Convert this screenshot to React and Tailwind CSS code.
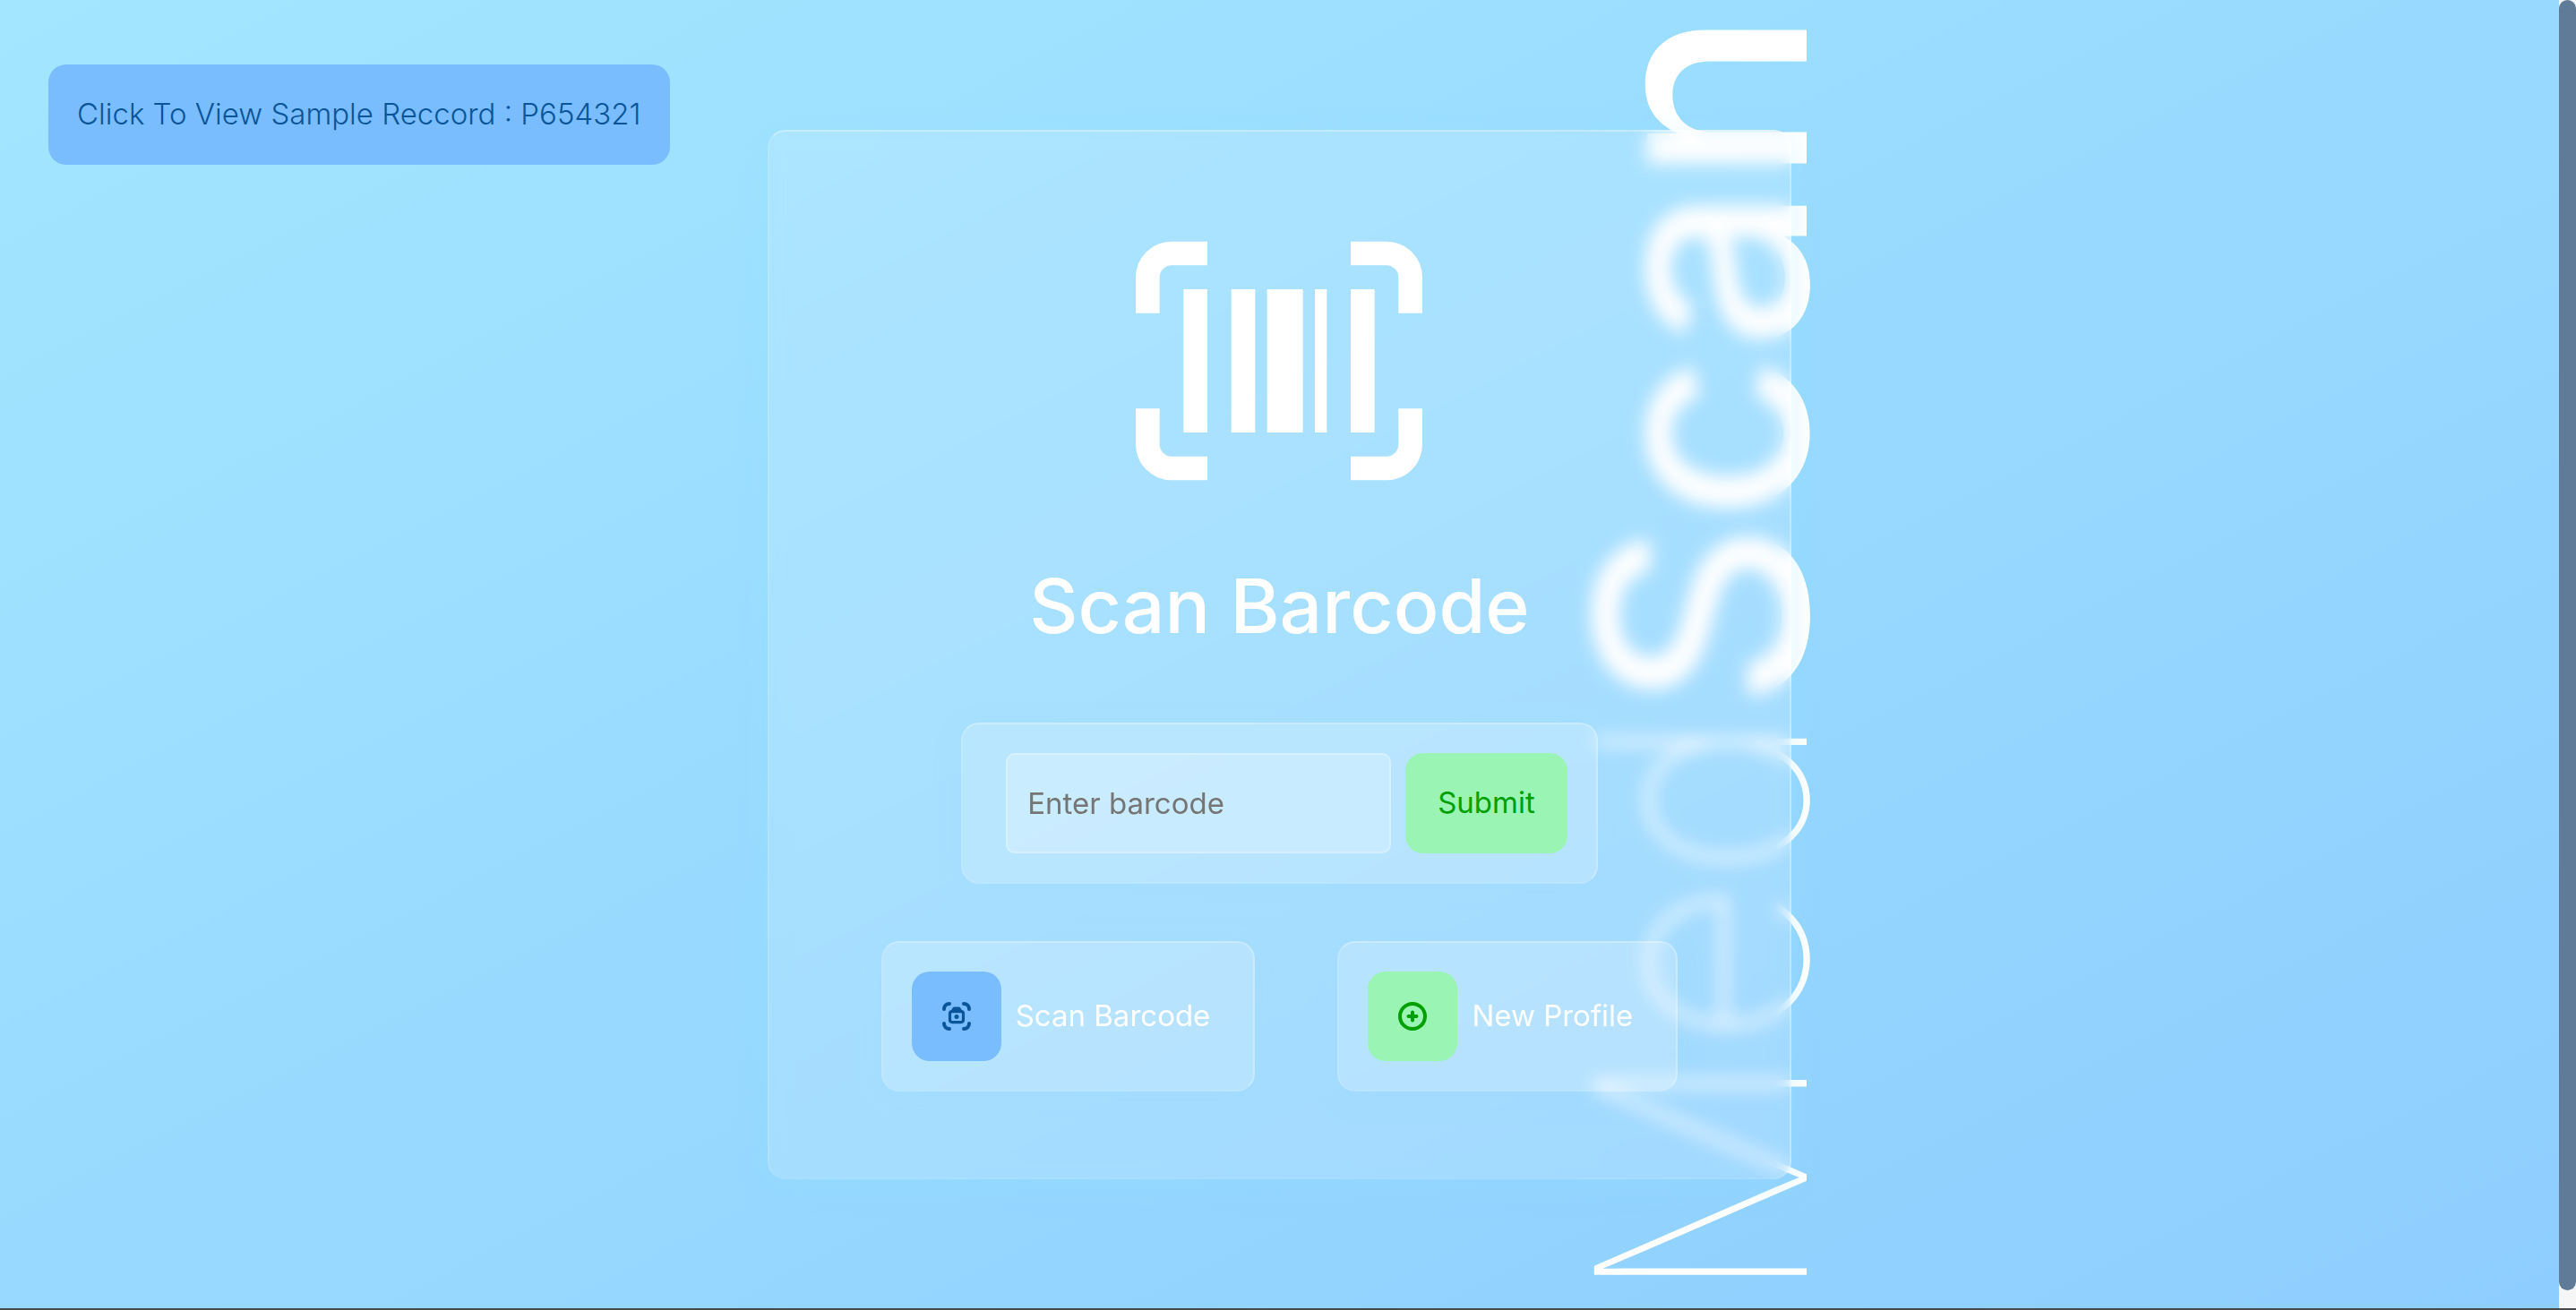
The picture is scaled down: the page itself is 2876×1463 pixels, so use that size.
import React from "react";

const glass =
  "border-2 border-white/25 border-b-white/5 border-l-white/10 bg-white/20 shadow-[0_8px_32px_rgba(150,215,255,0.15)]";

function BarcodeIcon() {
  return (
    <svg viewBox="0 0 24 24" className="size-80 text-white" fill="currentColor" aria-hidden="true">
      <path d="M0 8V5a3 3 0 0 1 3-3h3v2H3a1 1 0 0 0-1 1v3zM24 8V5a3 3 0 0 0-3-3h-3v2h3a1 1 0 0 1 1 1v3zM0 16v3a3 3 0 0 0 3 3h3v-2H3a1 1 0 0 1-1-1v-3zM24 16v3a3 3 0 0 1-3 3h-3v-2h3a1 1 0 0 0 1-1v-3z" />
      <path d="M4 6h2v12H4zM8 6h2v12H8zM11 6h3v12h-3zM15 6h1v12h-1zM18 6h2v12h-2z" />
    </svg>
  );
}

function CameraScanIcon() {
  return (
    <svg viewBox="0 0 32 32" className="size-8" fill="none" stroke="currentColor" aria-hidden="true">
      <g strokeWidth="4" strokeLinecap="round">
        <path d="M2 8C2 4.500 4.500 2 8 2M24 2C27.500 2 30 4.500 30 8M30 24C30 27.500 27.500 30 24 30M8 30C4.500 30 2 27.500 2 24" />
      </g>
      <rect x="8.500" y="10.600" width="15" height="12" rx="2.500" strokeWidth="3.200" />
      <path d="M9 10c1.500 0 2-4.500 4.500-4.500h5C21 5.500 21.500 10 23 10z" fill="currentColor" stroke="none" />
      <circle cx="16" cy="16.600" r="2.500" fill="currentColor" stroke="none" />
    </svg>
  );
}

function AddCircleIcon() {
  return (
    <svg viewBox="0 0 32 32" className="size-8" fill="none" stroke="currentColor" strokeWidth="4" aria-hidden="true">
      <circle cx="16" cy="16" r="14" />
      <path d="M16 11.500v9M11.500 16h9" strokeLinecap="round" />
    </svg>
  );
}

function Action({ id, label, tone, children }) {
  return (
    <div className={`flex items-center gap-4 rounded-[20px] py-8 pr-12 pl-8 ${glass}`}>
      <button
        type="button"
        aria-labelledby={id}
        className={`flex size-[100px] items-center justify-center rounded-[20px] ${tone}`}
      >
        {children}
      </button>
      <span id={id} className="text-[33px] text-white">{label}</span>
    </div>
  );
}

export default function App() {
  return (
    <div className="flex min-h-screen flex-col bg-[#454a4e] pb-0.5 font-['Inter',sans-serif]">
      <div className="flex flex-1">
        <main className="relative flex flex-1 items-center justify-center overflow-hidden bg-linear-to-br from-[#a3e6ff] via-[#98daff] to-[#8ecdff]">
          <div
            aria-hidden="true"
            className="absolute bottom-0 left-[1736px] rotate-180 text-[326px] leading-none whitespace-nowrap text-white [writing-mode:vertical-rl]"
          >
            <span className="font-thin">Med</span>
            <span className="font-[450]">Scan</span>
          </div>

          <button
            type="button"
            className="absolute top-[72px] left-[54px] h-28 rounded-[20px] bg-[#7abdff] px-8 text-[33px] font-light text-[#0a5599]"
          >
            Click To View Sample Reccord : P654321
          </button>

          <section className="relative flex w-2/5 min-w-fit flex-col items-center gap-16 rounded-[20px] border-2 border-white/30 border-b-white/5 border-l-white/10 bg-white/15 py-24 shadow-[0_8px_32px_rgba(150,225,255,0.3)] backdrop-blur-[10px]">
            <BarcodeIcon />
            <h1 className="mb-4 text-[84px] leading-[100px] font-medium text-white">Scan Barcode</h1>
            <form className={`flex items-center gap-4 rounded-[20px] py-8 pr-8 pl-12 ${glass}`} onSubmit={(e) => e.preventDefault()}>
              <input
                type="text"
                aria-label="Enter barcode"
                placeholder="Enter barcode"
                className="h-28 w-[430px] rounded-[10px] border-2 border-white/25 bg-white/25 px-[22px] text-[33px] text-gray-700 placeholder:text-[#757575]"
              />
              <button type="submit" className="h-28 rounded-[20px] bg-[#9af4b3] px-9 text-[33px] text-[#00a000]">
                Submit
              </button>
            </form>
            <div className="flex gap-[92px]">
              <Action id="scan-label" label="Scan Barcode" tone="bg-[#7abdff] text-[#0a5599]">
                <CameraScanIcon />
              </Action>
              <Action id="profile-label" label="New Profile" tone="bg-[#9af4b3] text-[#00a000]">
                <AddCircleIcon />
              </Action>
            </div>
          </section>
        </main>
        <div aria-hidden="true" className="flex w-[19px] flex-col bg-[#f6f6f6] pb-5">
          <div className="flex-1 rounded-full bg-[#5f7b97]" />
        </div>
      </div>
    </div>
  );
}
